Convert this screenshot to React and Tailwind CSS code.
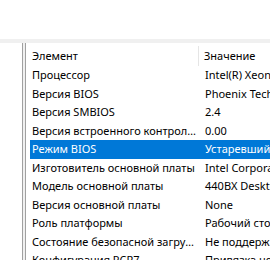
const rows = [
  ['Процессор', 'Intel(R) Xeon(R) CPU E5-2680 v2 @ 2.80GHz'],
  ['Версия BIOS', 'Phoenix Technologies LTD 6.00'],
  ['Версия SMBIOS', '2.4'],
  ['Версия встроенного контроллера', '0.00'],
  ['Режим BIOS', 'Устаревший'],
  ['Изготовитель основной платы', 'Intel Corporation'],
  ['Модель основной платы', '440BX Desktop Reference Platform'],
  ['Версия основной платы', 'None'],
  ['Роль платформы', 'Рабочий стол'],
  ['Состояние безопасной загрузки', 'Не поддерживается'],
  ['Конфигурация PCR7', 'Привязка невозможна'],
];

export default function App() {
  return (
    <div
      className="w-[270px] h-[260px] overflow-hidden bg-white text-[11px] text-black flex flex-col"
      style={{ fontFamily: '"Noto Sans", Roboto, sans-serif' }}
    >
      {/* toolbar area */}
      <div className="h-[39px] shrink-0 bg-white" />
      <div className="h-[4px] shrink-0 bg-[#f0f0f0]" />

      <div className="flex flex-1 min-h-0">
        {/* left tree pane */}
        <div className="w-[23px] shrink-0 bg-white border-r border-[#a0a0a0]" />
        <div className="w-[2px] shrink-0 bg-[#f0f0f0]" />

        {/* right list pane */}
        <div className="flex-1 min-w-0 bg-white border-l border-[#a0a0a0] pl-[4px] pt-[3px] overflow-hidden">
          <div className="flex h-[20px] items-center whitespace-nowrap">
            <div className="w-[169px] shrink-0 pl-[2px] h-full flex items-center border-r border-[#e5e5e5]">Элемент</div>
            <div className="pl-[5px]">Значение</div>
          </div>
          {rows.map(([k, v], i) => (
            <div
              key={k}
              className={
                'flex h-[18.5px] items-center whitespace-nowrap ' +
                (i === 4 ? 'bg-[#0078d7] text-white' : '')
              }
            >
              <div className="w-[169px] shrink-0 pl-[2px] pr-[2px] overflow-hidden text-ellipsis">{k}</div>
              <div className="flex-1 min-w-0 overflow-hidden pl-[6px]">{v}</div>
            </div>
          ))}
        </div>
      </div>
    </div>
  );
}
